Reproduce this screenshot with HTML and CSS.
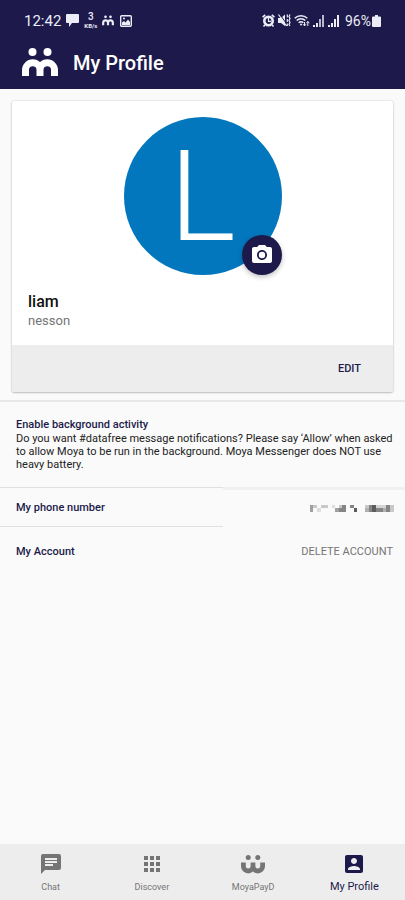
FILE: index.html
```html
<!DOCTYPE html>
<html lang="en">
<head>
<meta charset="utf-8">
<meta name="viewport" content="width=device-width, initial-scale=1">
<title>My Profile</title>
<link rel="stylesheet" href="styles.css">
</head>
<body>
<header class="top">
  <div class="status">
    <div class="status-group">
      <span class="clock">12:42</span>
      <svg width="13" height="13" viewBox="0 0 13 13" fill="currentColor"><path d="M1 0h11q1 0 1 1v7q0 1-1 1H6l-3 4V9H1Q0 9 0 8V1q0-1 1-1z"/></svg>
      <span class="rate"><b>3</b><span>KB/s</span></span>
      <svg width="12" height="11" viewBox="0 0 36 30" fill="none" stroke="currentColor"><g fill="currentColor" stroke="none"><circle cx="10.500" cy="4" r="4"/><circle cx="25.500" cy="4" r="4"/></g><path stroke-width="6.500" d="M3.500 29v-7a7.250 7.250 0 0 1 14.500 0v7M18 22a7.250 7.250 0 0 1 14.500 0v7"/></svg>
      <svg class="picture" width="12" height="12" viewBox="0 0 12 12"><rect x=".7" y=".7" width="10.600" height="10.600" rx="1" fill="none" stroke="currentColor" stroke-width="1.400"/><path fill="currentColor" d="M2 10V7.500l2-1.500 1.500 1.500L8 4.500l2 2.500v3z"/><circle cx="4" cy="3.500" r="1" fill="currentColor"/></svg>
    </div>
    <div class="status-group tight">
      <svg width="13" height="13" viewBox="0 0 13 13" fill="none" stroke="currentColor"><circle cx="6.500" cy="7" r="4.200" stroke-width="2.600"/><path stroke-width="1.600" d="M.6 3.200 3.200 .8M12.400 3.200 9.800 .8M2.800 11 1.500 12.500M10.200 11l1.300 1.500"/><path stroke-width="1.200" d="M6.500 4V7.300H9"/></svg>
      <svg width="13" height="13" viewBox="0 0 13 13"><path fill="currentColor" d="M0 4h3l4-3.500v11.500L3 9H0z"/><path fill="none" stroke="#1d1a4b" d="M2 .5l7 10"/><path fill="none" stroke="currentColor" stroke-width="1.200" d="M.5.500l8 11.500M9.300.5v3M9.300 5v3M9.300 9.500v2.500M12 .5l-1 2 1 2-1 2 1 2-1 2 1 1.500"/></svg>
      <svg width="16" height="13" viewBox="0 0 16 13" fill="none" stroke="currentColor" stroke-width="1.500"><path d="M.7 4.200a9 9 0 0 1 12.600 0M2.700 6.500a6 6 0 0 1 8.600 0M4.700 8.700a3.200 3.200 0 0 1 4.600 0"/><circle cx="7" cy="10.500" r="1" fill="currentColor" stroke="none"/><path stroke-width="1" d="M10.500 8v4M9 10.200l1.500 1.700L12 10.200M13.800 12V7.500M12.300 9.200 13.800 7.500l1.500 1.700"/></svg>
      <svg width="12" height="12" viewBox="0 0 12 12" fill="currentColor"><path d="M0 10h2v2H0zM3 8h2v4H3z"/><path opacity=".75" d="M6 4h2v8H6zM9 0h2v12H9z"/></svg>
      <svg width="12" height="12" viewBox="0 0 12 12" fill="currentColor"><path d="M0 10h2v2H0zM3 8h2v4H3zM6 4h2v8H6zM9 0h2v12H9z"/></svg>
      <span class="battery"><span class="percent">96%</span>
      <svg width="9" height="12" viewBox="0 0 9 12" fill="currentColor"><path d="M3 0h3v1.500h2q1 0 1 1V11q0 1-1 1H1q-1 0-1-1V2.500q0-1 1-1h2z"/></svg></span>
    </div>
  </div>
  <div class="title-bar">
    <svg width="36" height="30" viewBox="0 0 36 30" fill="none" stroke="currentColor" role="img" aria-label="Moya"><g fill="currentColor" stroke="none"><circle cx="10.500" cy="4" r="4"/><circle cx="25.500" cy="4" r="4"/></g><path stroke-width="7" d="M3.500 28v-6a7.250 7.250 0 0 1 14.500 0v6M18 22a7.250 7.250 0 0 1 14.500 0v6"/></svg>
    <h1>My Profile</h1>
  </div>
</header>

<main>
  <section class="card">
    <div class="card-body">
      <div class="avatar"><span>L</span>
        <button class="camera" type="button" aria-label="Change photo">
          <svg width="24" height="24" viewBox="0 0 24 24" fill="currentColor"><circle cx="12" cy="12" r="3.200"/><path d="M9 2 7.170 4H4c-1.100 0-2 .9-2 2v12c0 1.100.9 2 2 2h16c1.100 0 2-.9 2-2V6c0-1.100-.9-2-2-2h-3.170L15 2H9zm3 15c-2.760 0-5-2.240-5-5s2.240-5 5-5 5 2.240 5 5-2.240 5-5 5z"/></svg>
        </button>
      </div>
      <h2>liam</h2>
      <p class="surname">nesson</p>
    </div>
    <div class="card-actions"><button type="button">EDIT</button></div>
  </section>

  <section class="notice">
    <h3>Enable background activity</h3>
    <p>Do you want #datafree message notifications? Please say ‘Allow’ when asked to allow Moya to be run in the background. Moya Messenger does NOT use heavy battery.</p>
  </section>

  <section class="phone">
    <h3>My phone number</h3>
    <div class="hidden-number">
      <svg width="84" height="8" viewBox="0 0 84 8" shape-rendering="crispEdges" role="img" aria-label="Hidden number">
        <path fill="#a0a0a0" d="M0 0h3v7H0zM25 3h4v4h-4z"/>
        <path fill="#c8c8c8" d="M3 0h4v3H3zM11 0h7v3h-7zM29 0h3v3h-3zM55 0h4v3h-4zM80 0h4v7h-4z"/>
        <path fill="#dedede" d="M7 3h4v4H7zM22 0h3v3h-3z"/>
        <path fill="#858585" d="M32 0h4v3h-4zM29 3h7v4h-7zM40 0h4v3h-4zM59 0h3v7h-3zM66 3h14v4H66zM76 0h4v3h-4z"/>
        <path fill="#b0b0b0" d="M55 3h4v4h-4zM73 3h3v4h-3z"/>
        <path fill="#d4d4d4" d="M66 0h10v3H66z"/>
        <path fill="#5c5c5c" d="M44 3h3v4h-3zM62 0h4v7h-4z"/>
      </svg>
    </div>
  </section>

  <section class="account">
    <h3>My Account</h3>
    <button type="button">DELETE ACCOUNT</button>
  </section>
</main>

<nav class="tabs">
  <a href="#chat"><svg width="24" height="24" viewBox="0 0 24 24" fill="currentColor"><path d="M20 2H4c-1.100 0-1.990.9-1.990 2L2 22l4-4h14c1.100 0 2-.9 2-2V4c0-1.100-.9-2-2-2zM6 9h12v2H6V9zm8 5H6v-2h8v2zm4-6H6V6h12v2z"/></svg><span>Chat</span></a>
  <a href="#discover"><svg width="24" height="24" viewBox="0 0 24 24" fill="currentColor"><path d="M4 8h4V4H4v4zm6 12h4v-4h-4v4zm-6 0h4v-4H4v4zm0-6h4v-4H4v4zm6 0h4v-4h-4v4zm6-10v4h4V4h-4zm-6 4h4V4h-4v4zm6 6h4v-4h-4v4zm0 6h4v-4h-4v4z"/></svg><span>Discover</span></a>
  <a href="#pay"><svg width="24" height="24" viewBox="0 0 24 24" fill="none" stroke="currentColor"><g fill="currentColor" stroke="none"><circle cx="7.200" cy="5.500" r="2.500"/><circle cx="16.800" cy="5.500" r="2.500"/></g><path stroke-width="4.800" d="M2.400 10.500v3.700a4.800 4.800 0 0 0 9.600 0v-3.700M12 14.200a4.800 4.800 0 0 0 9.600 0v-3.700"/></svg><span>MoyaPayD</span></a>
  <a href="#profile" class="active" aria-current="page"><svg width="24" height="24" viewBox="0 0 24 24" fill="currentColor"><path d="M3 5v14c0 1.100.89 2 2 2h14c1.100 0 2-.9 2-2V5c0-1.100-.9-2-2-2H5c-1.110 0-2 .9-2 2zm12 4c0 1.660-1.340 3-3 3s-3-1.340-3-3 1.340-3 3-3 3 1.340 3 3zm-9 8c0-2 4-3.100 6-3.100s6 1.100 6 3.100v1H6v-1z"/></svg><span>My Profile</span></a>
</nav>
</body>
</html>
```
FILE: styles.css
```css
:root {
  --navy: #1d1a4b;
  --line: #e0e0e0;
  --grey: #ededed;
}
* { box-sizing: border-box; }
body {
  margin: 0;
  min-height: 100vh;
  display: flex;
  flex-direction: column;
  background: #fafafa;
  color: #222;
  font-family: Roboto, "Liberation Sans", sans-serif;
}
h1, h2, h3, p { margin: 0; font-weight: 500; }
button {
  border: 0;
  padding: 0;
  background: none;
  font: inherit;
  cursor: pointer;
}
svg { display: block; flex: none; }

.top { background: var(--navy); color: #fff; }
.status {
  display: flex;
  justify-content: space-between;
  align-items: center;
  height: 36px;
  padding: 5px 24px 0;
  color: #ececf6;
}
.status-group { display: flex; align-items: center; gap: 5px; }
.status-group.tight { gap: 3px; }
.clock { font-size: 15px; line-height: 16px; }
.percent { font-size: 14px; line-height: 16px; }
.battery { display: flex; align-items: center; gap: 1px; margin-left: 2px; }
.rate { display: flex; flex-direction: column; align-items: center; }
.rate b { font-size: 10px; line-height: 10px; font-weight: 500; }
.rate span { font-size: 6px; line-height: 7px; font-weight: 700; }
.picture { margin-left: 1px; }
.title-bar {
  display: flex;
  align-items: center;
  gap: 15px;
  height: 53px;
  padding: 0 22px;
}
.title-bar h1 { font-size: 20px; line-height: 24px; }

main { flex: 1; }
.card {
  margin: 12px 12px 8px;
  border-radius: 2px;
  background: #fff;
  box-shadow: 0 0 2px rgba(0, 0, 0, .2), 0 1px 2px rgba(0, 0, 0, .2);
  overflow: hidden;
}
.card-body { padding: 16px 16px 15px; }
.avatar {
  position: relative;
  display: flex;
  align-items: center;
  justify-content: center;
  width: 158px;
  height: 158px;
  margin: 0 auto 17px;
  padding-top: 2px;
  border-radius: 50%;
  background: #0277bd;
  color: #fff;
  font-size: 126px;
  font-weight: 300;
  line-height: 158px;
}
.camera {
  position: absolute;
  right: 0;
  bottom: 0;
  display: flex;
  align-items: center;
  justify-content: center;
  width: 40px;
  height: 40px;
  border-radius: 50%;
  background: var(--navy);
  color: #fff;
  box-shadow: 0 2px 5px rgba(0, 0, 0, .25);
}
.card h2 { font-size: 16px; line-height: 20px; color: #111; }
.surname { font-size: 13px; line-height: 18px; font-weight: 400; color: #757575; }
.card-actions {
  display: flex;
  justify-content: flex-end;
  height: 47px;
  padding: 0 32px;
  background: var(--grey);
}
.card-actions button { font-size: 11px; font-weight: 500; color: var(--navy); }

h3 { font-size: 11px; line-height: 15px; color: var(--navy); }
.notice {
  padding: 15px 8px 16px 16px;
  border-top: 2px solid #e8e8e8;
}
.notice p { font-size: 11px; line-height: 13px; font-weight: 400; }
.phone { display: grid; grid-template-columns: 55fr 45fr; }
.phone h3 {
  padding: 12px 16px 11px;
  border-top: 1px solid var(--line);
  border-bottom: 1px solid var(--line);
}
.hidden-number {
  display: flex;
  align-items: center;
  justify-content: flex-end;
  padding: 0 11px;
  border-top: 3px solid #f0f0f0;
}
.account {
  display: flex;
  align-items: center;
  justify-content: space-between;
  height: 48px;
  padding: 0 12px 0 16px;
}
.account button { font-size: 11px; color: #757575; }

.tabs {
  display: grid;
  grid-template-columns: repeat(4, 1fr);
  height: 56px;
  background: var(--grey);
}
.tabs a {
  display: flex;
  flex-direction: column;
  align-items: center;
  gap: 5px;
  padding-top: 8px;
  color: #757575;
  font-size: 9px;
  line-height: 12px;
  text-decoration: none;
}
.tabs .active { color: var(--navy); font-size: 11px; }
```
